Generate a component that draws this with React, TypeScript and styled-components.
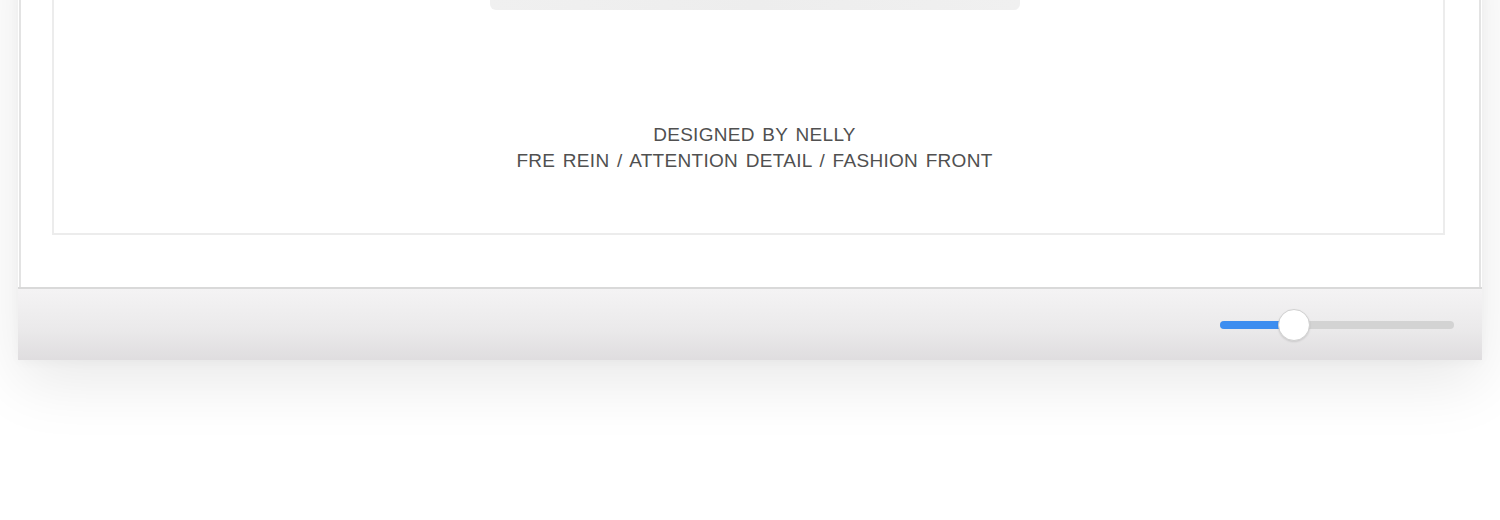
import React from "react";
import styled, { createGlobalStyle } from "styled-components";

const GlobalStyle = createGlobalStyle`
  html, body { margin: 0; padding: 0; background: #ffffff; }
  body { font-family: "Liberation Sans", Arial, sans-serif; overflow: hidden; }
`;

const Page = styled.div`
  height: 520px;
  overflow: hidden;
  padding: 0 18px 0 18px;
  box-sizing: border-box;
`;

const Window = styled.div`
  margin-top: -80px;
  display: flex;
  flex-direction: column;
  background: #ffffff;
  box-shadow: 0 22px 60px rgba(0, 0, 0, 0.09), 0 2px 10px rgba(0, 0, 0, 0.03);
`;

const Body = styled.div`
  border-left: 2px solid #e3e3e3;
  border-right: 2px solid #e3e3e3;
  margin: 0 1px;
  padding: 0 34px 52px 31px;
`;

const Frame = styled.div`
  border: 2px solid #ececec;
  display: flex;
  flex-direction: column;
  align-items: center;
  padding: 0 0 59px 12px;
`;

const Photo = styled.div`
  width: 530px;
  height: 88px;
  border-radius: 0 0 6px 6px;
  background: linear-gradient(90deg, #f0f0f0 0%, #ededed 50%, #f0f0f0 100%);
`;

const Caption = styled.div`
  margin-top: 112px;
  display: flex;
  flex-direction: column;
  align-items: center;
  color: #505050;
  font-size: 19px;
  line-height: 26px;
  letter-spacing: 0.3px;
  word-spacing: 2px;
  text-transform: uppercase;
`;

const CaptionLine = styled.span`
  display: block;
  white-space: nowrap;
`;

const Toolbar = styled.div`
  height: 71px;
  border-top: 2px solid #d9d9d9;
  background: linear-gradient(180deg, #f4f3f4 0%, #ebeaeb 55%, #dfdddf 100%);
  display: flex;
  align-items: center;
  justify-content: flex-end;
  padding-right: 28px;
`;

const Track = styled.div`
  position: relative;
  width: 234px;
  height: 8px;
  border-radius: 4px;
  background: #d3d3d3;
`;

const Fill = styled.div`
  height: 100%;
  border-radius: 4px 0 0 4px;
  background: #3d8ef0;
`;

const Thumb = styled.div`
  position: absolute;
  top: 50%;
  width: 32px;
  height: 32px;
  margin-left: -16px;
  margin-top: -16px;
  border-radius: 50%;
  background: #ffffff;
  border: 1px solid #d0d0d0;
  box-sizing: border-box;
  box-shadow: 0 1px 2px rgba(0, 0, 0, 0.12);
`;

function Slider({ value }: { value: number }) {
  const pct = `${value * 100}%`;
  return (
    <Track>
      <Fill style={{ width: pct }} />
      <Thumb style={{ left: pct }} />
    </Track>
  );
}

export default function App() {
  return (
    <>
      <GlobalStyle />
      <Page>
        <Window>
          <Body>
            <Frame>
              <Photo />
              <Caption>
                <CaptionLine>Designed by Nelly</CaptionLine>
                <CaptionLine>Fre Rein / Attention Detail / Fashion Front</CaptionLine>
              </Caption>
            </Frame>
          </Body>
          <Toolbar>
            <Slider value={0.316} />
          </Toolbar>
        </Window>
      </Page>
    </>
  );
}
